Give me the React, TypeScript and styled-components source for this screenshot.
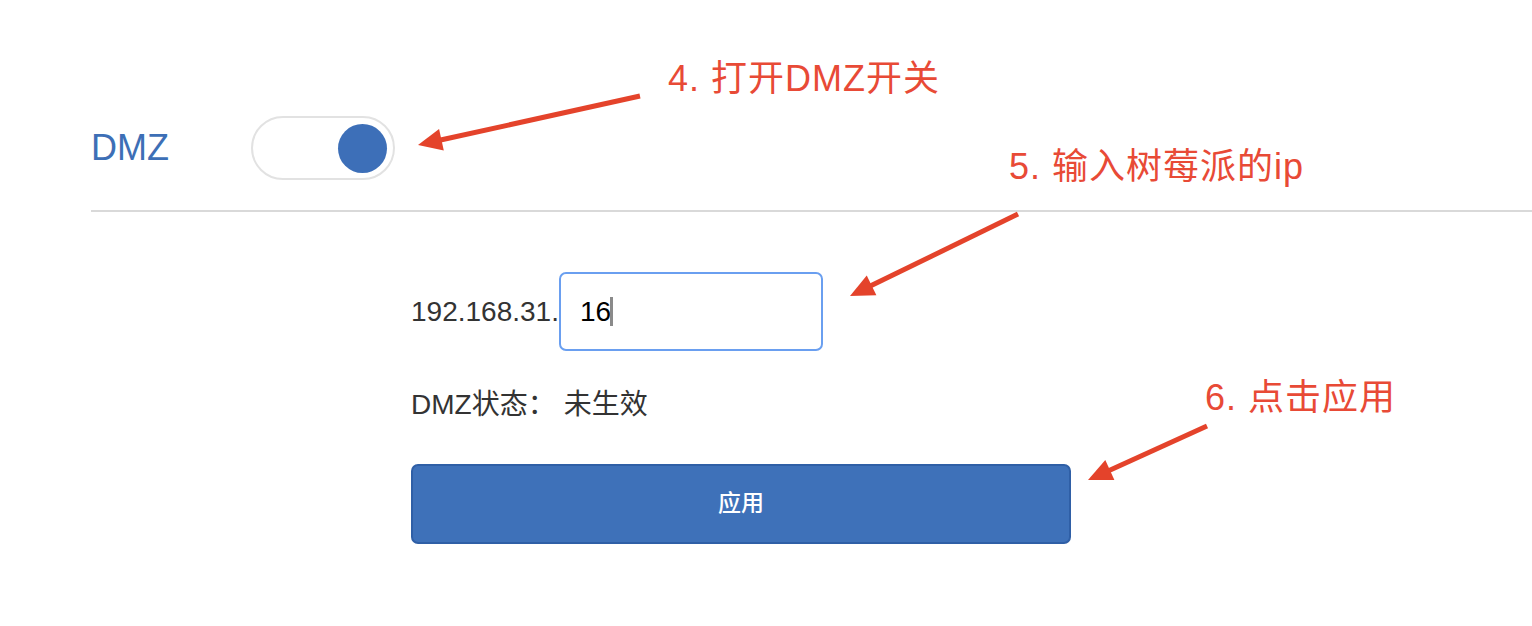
import React from 'react';
import styled, { createGlobalStyle } from 'styled-components';

const GlobalStyle = createGlobalStyle`
  html, body {
    margin: 0;
    padding: 0;
    background: #ffffff;
  }
  body {
    font-family: "Liberation Sans", "Noto Sans CJK SC", sans-serif;
  }
`;

const Page = styled.div`
  position: relative;
  width: 1532px;
  height: 626px;
  overflow: hidden;
  background: #ffffff;
`;

const Header = styled.div`
  display: flex;
  align-items: center;
  padding: 116px 0 0 91px;
  height: 64px;
`;

const Title = styled.div`
  width: 160px;
  font-size: 36px;
  color: #3d6fb6;
  line-height: 1;
`;

const Toggle = styled.div<{ $on: boolean }>`
  box-sizing: border-box;
  display: flex;
  align-items: center;
  justify-content: ${(p) => (p.$on ? 'flex-end' : 'flex-start')};
  width: 144px;
  height: 64px;
  padding: 0 6px;
  border: 2px solid #e2e2e2;
  border-radius: 32px;
  background: #ffffff;
`;

const Knob = styled.div`
  width: 49px;
  height: 49px;
  border-radius: 50%;
  background: #3d6fb8;
`;

const Divider = styled.hr`
  margin: 30px 0 0 91px;
  border: none;
  height: 2px;
  background: #d9d9d9;
`;

const Form = styled.div`
  display: flex;
  flex-direction: column;
  padding: 60px 0 0 411px;
`;

const Row = styled.div`
  display: flex;
  align-items: center;
  font-size: 28px;
  color: #333333;
`;

const Prefix = styled.span`
  margin-right: 0;
`;

const Field = styled.div`
  box-sizing: border-box;
  display: flex;
  align-items: center;
  width: 264px;
  height: 79px;
  padding: 0 19px;
  border: 2px solid #6a9ff0;
  border-radius: 7px;
  font-size: 28px;
  color: #000000;
`;

const Caret = styled.span`
  display: inline-block;
  width: 3px;
  height: 29px;
  margin-left: -1px;
  background: #8a8a8a;
`;

const Status = styled(Row)`
  margin-top: 31px;
  height: 40px;
`;

const StatusValue = styled.span`
  margin-left: 8px;
`;

const ApplyButton = styled.button`
  box-sizing: border-box;
  margin-top: 42px;
  width: 660px;
  height: 80px;
  padding: 0 0 6px;
  border: 2px solid #2f5fa6;
  border-radius: 7px;
  background: #3e71b9;
  color: #ffffff;
  font-family: "Noto Sans CJK SC", sans-serif;
  font-size: 23px;
  font-weight: 500;
  line-height: 1;
`;

const Note = styled.div<{ $x: number; $y: number }>`
  position: absolute;
  left: ${(p) => p.$x}px;
  top: ${(p) => p.$y}px;
  font-family: "Liberation Sans", "Noto Sans CJK SC", sans-serif;
  font-size: 36px;
  letter-spacing: 1px;
  line-height: 1;
  color: #e84a36;
  white-space: nowrap;
`;

const Overlay = styled.svg`
  position: absolute;
  left: 0;
  top: 0;
  pointer-events: none;
`;

type ArrowProps = { x1: number; y1: number; x2: number; y2: number };

const Arrow: React.FC<ArrowProps> = ({ x1, y1, x2, y2 }) => {
  const dx = x2 - x1;
  const dy = y2 - y1;
  const len = Math.sqrt(dx * dx + dy * dy);
  const ux = dx / len;
  const uy = dy / len;
  const headLen = 24;
  const headW = 11;
  const bx = x2 - ux * headLen;
  const by = y2 - uy * headLen;
  const points = `${x2},${y2} ${bx - uy * headW},${by + ux * headW} ${bx + uy * headW},${by - ux * headW}`;
  return (
    <g>
      <line x1={x1} y1={y1} x2={bx + ux * 2} y2={by + uy * 2} stroke="#e4432b" strokeWidth={5} />
      <polygon points={points} fill="#e4432b" />
    </g>
  );
};

const App: React.FC = () => {
  return (
    <Page>
      <GlobalStyle />
      <Header>
        <Title>DMZ</Title>
        <Toggle $on>
          <Knob />
        </Toggle>
      </Header>
      <Divider />
      <Form>
        <Row>
          <Prefix>192.168.31.</Prefix>
          <Field>
            16
            <Caret />
          </Field>
        </Row>
        <Status>
          DMZ状态：
          <StatusValue>未生效</StatusValue>
        </Status>
        <ApplyButton>应用</ApplyButton>
      </Form>

      <Note $x={668} $y={61}>4. 打开DMZ开关</Note>
      <Note $x={1009} $y={149}>5. 输入树莓派的ip</Note>
      <Note $x={1205} $y={380}>6. 点击应用</Note>

      <Overlay width={1532} height={626}>
        <Arrow x1={640} y1={96} x2={418} y2={145} />
        <Arrow x1={1018} y1={214} x2={850} y2={296} />
        <Arrow x1={1207} y1={426} x2={1088} y2={480} />
      </Overlay>
    </Page>
  );
};

export default App;
